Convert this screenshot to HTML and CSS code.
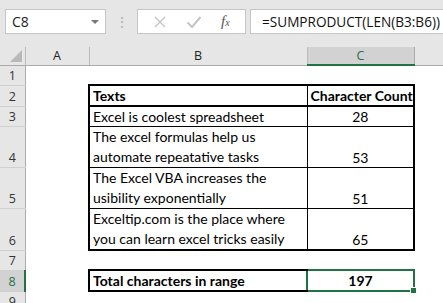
FILE: index.html
```html
<!DOCTYPE html>
<html>
<head>
    <title>Character Count</title>
    <meta charset="utf-8">
    <link rel="stylesheet" href="styles.css">
</head>
<body>
    <div class="bar">
        <div class="namebox">
            <span>C8</span>
            <span class="caret"></span>
        </div>
        <div class="grip">⋮</div>
        <div class="buttons">
            <svg width="14" height="14" viewBox="0 0 14 14"><path d="M2 2 L12 12 M12 2 L2 12" stroke="#c4c4c4" stroke-width="1.4" fill="none"/></svg>
            <svg width="16" height="14" viewBox="0 0 16 14"><path d="M1.5 7.5 L6 12 L14.5 2" stroke="#c4c4c4" stroke-width="2" fill="none"/></svg>
            <span class="fx">f<sub>x</sub></span>
        </div>
        <div class="formula">=SUMPRODUCT(LEN(B3:B6))</div>
    </div>

    <table class="sheet">
        <colgroup>
            <col class="w-rh"><col class="w-a"><col class="w-b"><col class="w-c"><col>
        </colgroup>
        <tr class="head">
            <th class="corner"><span class="tri"></span></th>
            <th>A</th>
            <th>B</th>
            <th class="sel">C</th>
            <th class="last"></th>
        </tr>
        <tr class="r1"><th class="rh">1</th><td></td><td></td><td></td><td></td></tr>
        <tr class="r1"><th class="rh">2</th><td></td>
            <td class="t top left hb bold">Texts</td>
            <td class="t top right hb bold center">Character Count</td><td></td></tr>
        <tr class="r1"><th class="rh">3</th><td></td>
            <td class="t left">Excel is coolest spreadsheet</td>
            <td class="t right center">28</td><td></td></tr>
        <tr class="r2x"><th class="rh">4</th><td></td>
            <td class="t left wrap">The excel formulas help us automate repeatative tasks</td>
            <td class="t right center">53</td><td></td></tr>
        <tr class="r2x"><th class="rh">5</th><td></td>
            <td class="t left wrap">The Excel VBA increases the usibility exponentially</td>
            <td class="t right center">51</td><td></td></tr>
        <tr class="r2x"><th class="rh">6</th><td></td>
            <td class="t left bottom wrap">Exceltip.com is the place where you can learn excel tricks easily</td>
            <td class="t right bottom center">65</td><td></td></tr>
        <tr class="r1"><th class="rh">7</th><td></td><td></td><td></td><td></td></tr>
        <tr class="r1"><th class="rh active">8</th><td></td>
            <td class="t top left bottom bold">Total characters in range</td>
            <td class="t cur bold center">197<span class="handle"></span></td><td></td></tr>
        <tr class="r1"><th class="rh">9</th><td></td><td></td><td></td><td></td></tr>
    </table>
</body>
</html>
```

FILE: styles.css
```css
body { margin: 0; width: 443px; height: 303px; overflow: hidden; background: #fff; font-family: "Open Sans", sans-serif; }

.bar { height: 47px; background: #e6e6e6; display: flex; align-items: flex-start; padding-top: 9px; box-sizing: border-box; }
.namebox { margin-left: 5px; width: 101px; height: 25px; box-sizing: border-box; background: #fff; border: 1px solid #c6c6c6; display: flex; align-items: center; justify-content: space-between; padding: 0 6px 0 6px; font-size: 14px; color: #222; }
.caret { width: 0; height: 0; border-left: 4px solid transparent; border-right: 4px solid transparent; border-top: 4px solid #777; }
.grip { width: 31px; text-align: center; color: #b0b0b0; font-size: 14px; line-height: 25px; }
.buttons { width: 109px; height: 25px; box-sizing: border-box; background: #fff; border: 1px solid #c6c6c6; display: flex; align-items: center; justify-content: space-around; padding: 0 6px; }
.fx { font-family: "Liberation Serif", serif; font-style: italic; font-size: 15px; color: #555; }
.fx sub { font-size: 10px; vertical-align: 0; }
.formula { margin-left: 4px; flex: 1; height: 25px; box-sizing: border-box; background: #fff; border: 1px solid #c6c6c6; border-right: 0; padding-left: 11px; font-size: 13.6px; line-height: 23px; color: #111; white-space: nowrap; }

.sheet { border-collapse: collapse; table-layout: fixed; width: 443px; font-family: "Lato", sans-serif; font-size: 14px; color: #000; }
.w-rh { width: 25px; }
.w-a { width: 64px; }
.w-b { width: 218px; }
.w-c { width: 107px; }

.head th { height: 17px; padding: 0; background: #e6e6e6; border-right: 1px solid #bcbcbc; border-bottom: 1px solid #ababab; font-family: "Open Sans", sans-serif; font-weight: normal; font-size: 12.5px; line-height: 16px; color: #222; }
.head th.last { border-right: 0; }
.head th.sel { background: #d2d2d2; color: #217346; border-bottom: 2px solid #217346; border-right: 1px solid #ababab; }
.corner { position: relative; }
.tri { position: absolute; right: 3px; bottom: 3px; width: 0; height: 0; border-left: 12px solid transparent; border-bottom: 12px solid #b9b9b9; }

.rh { background: #e6e6e6; border-right: 1px solid #ababab; border-bottom: 1px solid #d0d0d0; font-family: "Open Sans", sans-serif; font-weight: normal; font-size: 12.5px; color: #333; padding: 0; vertical-align: bottom; line-height: 18px; }
.rh.active { background: #d2d2d2; color: #217346; border-right: 2px solid #217346; }

.r1 { height: 20px; }
.r2x { height: 40px; }

td { padding: 0 3px; vertical-align: bottom; line-height: 19px; white-space: nowrap; overflow: hidden; }
td.wrap { white-space: normal; line-height: 20px; }
td.t { border: 1px solid #000; }
td.top { border-top: 2px solid #000; }
td.left { border-left: 2px solid #000; }
td.right { border-right: 2px solid #000; }
td.bottom { border-bottom: 2px solid #000; }
td.hb { border-bottom: 2px solid #000; }
.bold { font-weight: bold; }
.center { text-align: center; }
td.cur { border: 2px solid #217346; position: relative; overflow: visible; }
.handle { position: absolute; right: -4px; bottom: -4px; width: 5px; height: 5px; background: #217346; border: 1px solid #fff; }
```
